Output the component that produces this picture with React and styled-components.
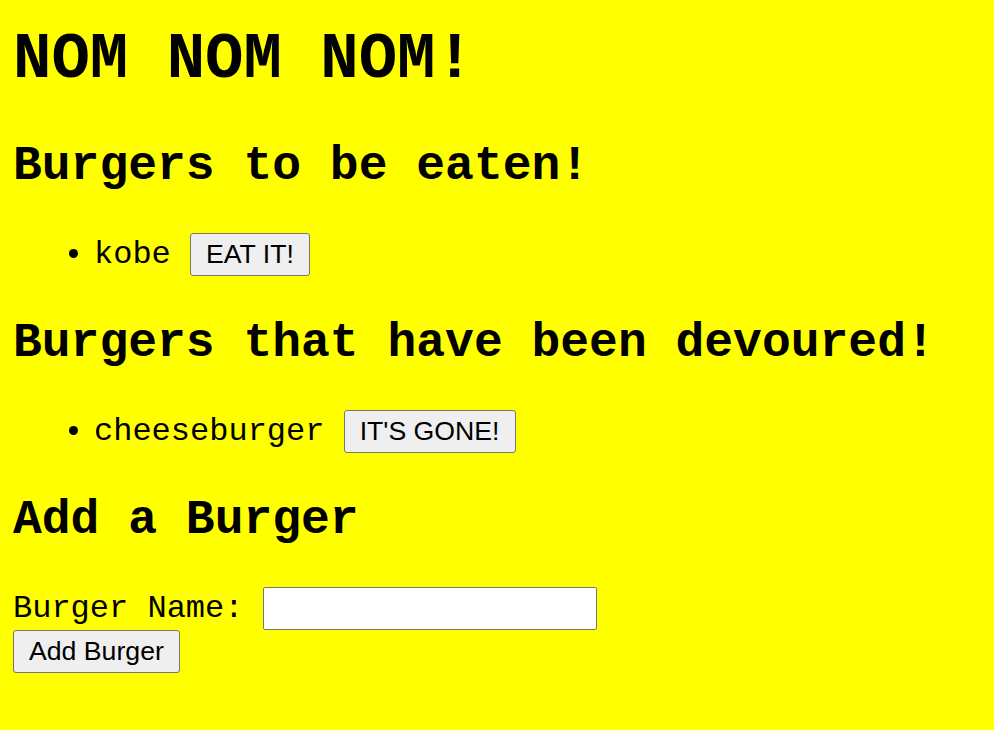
import React, { useState } from 'react';
import styled, { createGlobalStyle } from 'styled-components';

const GlobalStyle = createGlobalStyle`
  html, body {
    background: #ffff00;
  }

  body {
    color: #000;
    font-family: "Courier New", "Liberation Mono", monospace;
    font-size: 32px;
    margin: 12px 13px;
  }
`;

const Title = styled.h1`
  font-size: 64px;
  font-weight: bold;
  margin: 12px 0 43px 0;
`;

const SectionTitle = styled.h2`
  font-size: 48px;
  font-weight: bold;
  margin: 40px 0;
`;

const BurgerList = styled.ul`
  list-style: disc;
  margin: 32px 0;
  padding-left: 81px;
`;

const BurgerItem = styled.li`
  font-size: 32px;
`;

const Button = styled.button`
  background: #efefef;
  border: 1px solid #767676;
  border-radius: 3px;
  color: #000;
  cursor: pointer;
  font-family: "Liberation Sans", Arial, sans-serif;
  font-size: 26.67px;
  margin: 0;
  padding: 5px 15px;

  &:hover {
    background: #e5e5e5;
  }
`;

const Label = styled.label`
  font-size: 32px;
`;

const NameInput = styled.input`
  background: #fff;
  border: 1px solid #767676;
  border-radius: 2px;
  box-sizing: border-box;
  font-family: "Liberation Sans", Arial, sans-serif;
  font-size: 26.67px;
  height: 43px;
  margin: 0;
  padding: 5px 4px;
  width: 334px;
`;

const App = () => {
  const [toEat] = useState(['kobe']);
  const [devoured] = useState(['cheeseburger']);
  const [name, setName] = useState('');

  return (
    <>
      <GlobalStyle />
      <Title>NOM NOM NOM!</Title>

      <SectionTitle>Burgers to be eaten!</SectionTitle>
      <BurgerList>
        {toEat.map(burger => (
          <BurgerItem key={burger}>
            {burger} <Button>EAT IT!</Button>
          </BurgerItem>
        ))}
      </BurgerList>

      <SectionTitle>Burgers that have been devoured!</SectionTitle>
      <BurgerList>
        {devoured.map(burger => (
          <BurgerItem key={burger}>
            {burger} <Button>IT'S GONE!</Button>
          </BurgerItem>
        ))}
      </BurgerList>

      <SectionTitle>Add a Burger</SectionTitle>
      <form onSubmit={e => e.preventDefault()}>
        <Label htmlFor="burger-name">Burger Name:</Label>{' '}
        <NameInput id="burger-name" type="text" value={name} onChange={e => setName(e.target.value)} />
        <br />
        <Button type="submit">Add Burger</Button>
      </form>
    </>
  );
};

export default App;
